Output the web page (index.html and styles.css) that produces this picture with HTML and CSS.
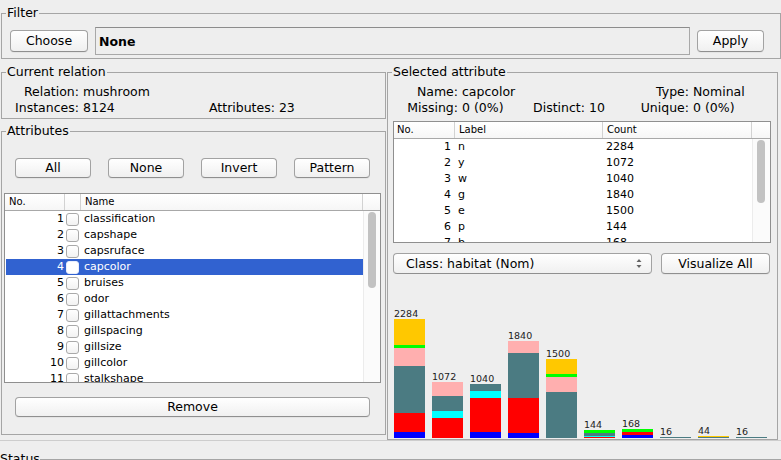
FILE: index.html
```html
<!DOCTYPE html>
<html>
<head>
<meta charset="utf-8">
<title>Weka Explorer - Preprocess</title>
<link rel="stylesheet" href="styles.css">
</head>
<body>
<div class="app">
  <section class="group filter">
    <div class="title">Filter</div>
    <div class="filter-row">
      <button class="btn choose">Choose</button>
      <div class="field">None</div>
      <button class="btn apply">Apply</button>
    </div>
  </section>

  <div class="columns">
    <div class="left">
      <section class="group relation">
        <div class="title">Current relation</div>
        <div class="info rel-info">
          <span class="lbl">Relation:</span><span class="val">mushroom</span><span></span><span></span>
          <span class="lbl">Instances:</span><span class="val">8124</span><span class="lbl2">Attributes:</span><span class="val">23</span>
        </div>
      </section>

      <section class="group attributes">
        <div class="title">Attributes</div>
        <div class="sel-buttons">
          <button class="btn small">All</button>
          <button class="btn small">None</button>
          <button class="btn small">Invert</button>
          <button class="btn small">Pattern</button>
        </div>
        <div class="table attr-table">
          <div class="thead">
            <span class="th">No.</span><span class="th"></span><span class="th">Name</span><span class="th filler"></span>
          </div>
          <div class="tbody">
            <div class="rows">
              <div class="tr"><span class="td num">1</span><span class="td chk"><i class="cb"></i></span><span class="td name">classification</span></div>
              <div class="tr"><span class="td num">2</span><span class="td chk"><i class="cb"></i></span><span class="td name">capshape</span></div>
              <div class="tr"><span class="td num">3</span><span class="td chk"><i class="cb"></i></span><span class="td name">capsruface</span></div>
              <div class="tr selected"><span class="td num">4</span><span class="td chk"><i class="cb"></i></span><span class="td name">capcolor</span></div>
              <div class="tr"><span class="td num">5</span><span class="td chk"><i class="cb"></i></span><span class="td name">bruises</span></div>
              <div class="tr"><span class="td num">6</span><span class="td chk"><i class="cb"></i></span><span class="td name">odor</span></div>
              <div class="tr"><span class="td num">7</span><span class="td chk"><i class="cb"></i></span><span class="td name">gillattachments</span></div>
              <div class="tr"><span class="td num">8</span><span class="td chk"><i class="cb"></i></span><span class="td name">gillspacing</span></div>
              <div class="tr"><span class="td num">9</span><span class="td chk"><i class="cb"></i></span><span class="td name">gillsize</span></div>
              <div class="tr"><span class="td num">10</span><span class="td chk"><i class="cb"></i></span><span class="td name">gillcolor</span></div>
              <div class="tr"><span class="td num">11</span><span class="td chk"><i class="cb"></i></span><span class="td name">stalkshape</span></div>
            </div>
            <div class="vscroll"><div class="thumb attr-thumb"></div></div>
          </div>
        </div>
        <button class="btn remove">Remove</button>
      </section>
    </div>

    <section class="group selected">
      <div class="title">Selected attribute</div>
      <div class="info sel-info">
        <span class="lbl">Name:</span><span class="val">capcolor</span><span></span><span></span><span class="lbl">Type:</span><span class="val">Nominal</span>
        <span class="lbl">Missing:</span><span class="val">0 (0%)</span><span class="lbl">Distinct:</span><span class="val">10</span><span class="lbl">Unique:</span><span class="val">0 (0%)</span>
      </div>
      <div class="table val-table">
        <div class="thead">
          <span class="th">No.</span><span class="th">Label</span><span class="th">Count</span><span class="th filler"></span>
        </div>
        <div class="tbody">
          <div class="rows">
            <div class="tr"><span class="td num">1</span><span class="td">n</span><span class="td">2284</span></div>
            <div class="tr"><span class="td num">2</span><span class="td">y</span><span class="td">1072</span></div>
            <div class="tr"><span class="td num">3</span><span class="td">w</span><span class="td">1040</span></div>
            <div class="tr"><span class="td num">4</span><span class="td">g</span><span class="td">1840</span></div>
            <div class="tr"><span class="td num">5</span><span class="td">e</span><span class="td">1500</span></div>
            <div class="tr"><span class="td num">6</span><span class="td">p</span><span class="td">144</span></div>
            <div class="tr"><span class="td num">7</span><span class="td">b</span><span class="td">168</span></div>
          </div>
          <div class="vscroll"><div class="thumb val-thumb"></div></div>
        </div>
      </div>
      <div class="controls">
        <div class="select">
          <span>Class: habitat (Nom)</span>
          <svg class="arrows" width="6" height="11" viewBox="0 0 6 11"><path d="M0.5 4 L3 1 L5.5 4 Z M0.5 7 L3 10 L5.5 7 Z" fill="#666"/></svg>
        </div>
        <button class="btn visualize">Visualize All</button>
      </div>
      <div class="histogram">
        <div class="bar"><span class="blabel">2284</span><div class="stack">
          <i class="or" style="height:26px"></i><i class="gr" style="height:3px"></i><i class="pk" style="height:18px"></i><i class="tl" style="height:47px"></i><i class="rd" style="height:19px"></i><i class="bl" style="height:6px"></i>
        </div></div>
        <div class="bar"><span class="blabel">1072</span><div class="stack">
          <i class="pk" style="height:14px"></i><i class="tl" style="height:15px"></i><i class="cy" style="height:7px"></i><i class="rd" style="height:20px"></i>
        </div></div>
        <div class="bar"><span class="blabel">1040</span><div class="stack">
          <i class="tl" style="height:7px"></i><i class="cy" style="height:7px"></i><i class="rd" style="height:34px"></i><i class="bl" style="height:6px"></i>
        </div></div>
        <div class="bar"><span class="blabel">1840</span><div class="stack">
          <i class="pk" style="height:12px"></i><i class="tl" style="height:45px"></i><i class="rd" style="height:35px"></i><i class="bl" style="height:5px"></i>
        </div></div>
        <div class="bar"><span class="blabel">1500</span><div class="stack">
          <i class="or" style="height:15px"></i><i class="gr" style="height:3px"></i><i class="pk" style="height:15px"></i><i class="tl" style="height:46px"></i>
        </div></div>
        <div class="bar"><span class="blabel">144</span><div class="stack">
          <i class="gr" style="height:3px"></i><i class="tl" style="height:3px"></i><i class="cy" style="height:1px"></i><i class="rd" style="height:1px"></i>
        </div></div>
        <div class="bar"><span class="blabel">168</span><div class="stack">
          <i class="gr" style="height:3px"></i><i class="rd" style="height:3px"></i><i class="bl" style="height:3px"></i>
        </div></div>
        <div class="bar"><span class="blabel">16</span><div class="stack">
          <i class="tl" style="height:1px"></i>
        </div></div>
        <div class="bar"><span class="blabel">44</span><div class="stack">
          <i class="or" style="height:1px"></i><i class="tl" style="height:1px"></i>
        </div></div>
        <div class="bar"><span class="blabel">16</span><div class="stack">
          <i class="tl" style="height:1px"></i>
        </div></div>
      </div>
    </section>
  </div>

  <div class="sep"></div>
  <section class="group status">
    <div class="title status-title">Status</div>
  </section>
</div>
</body>
</html>
```

FILE: styles.css
```css
* { box-sizing: border-box; }
html, body { margin: 0; padding: 0; }
body {
  width: 781px;
  height: 460px;
  overflow: hidden;
  background: #eeeeee;
  font-family: "DejaVu Sans", "Liberation Sans", sans-serif;
  font-size: 12.5px;
  color: #000;
}

.app {
  width: 781px;
  height: 460px;
  overflow: hidden;
  padding-top: 13px;
}

/* Titled group boxes */
.group {
  border: 1px solid #a5a5a5;
}
.title {
  display: table;
  margin: -8px 0 0 4px;
  padding: 0 1px;
  line-height: 14px;
  background: #eeeeee;
  white-space: nowrap;
}

/* Filter */
.filter {
  margin-left: 1px;
  width: 780px;
  height: 46px;
}
.filter-row {
  display: flex;
  align-items: center;
  gap: 7px;
  padding: 7px 0 0 8px;
}

.btn {
  display: block;
  font-family: inherit;
  font-size: 12.5px;
  color: #000;
  background: linear-gradient(#ffffff, #f0f0f0);
  border: 1px solid #a2a2a2;
  border-bottom-color: #8f8f8f;
  border-radius: 4px;
  padding: 0;
  margin: 0;
  line-height: 18px;
  box-shadow: 0 1px 0 rgba(0,0,0,0.04);
}
.choose { width: 78px; height: 22px; }
.apply { width: 67px; height: 22px; }
.field {
  width: 595px;
  height: 28px;
  border: 1px solid #a8a8a8;
  border-top-color: #8c8c8c;
  background: #eeeeee;
  font-weight: bold;
  line-height: 28px;
  padding-left: 3px;
}

/* Columns */
.columns {
  display: flex;
  margin-top: 13px;
  padding-left: 1px;
}
.left { width: 385px; }
.relation { height: 47px; }
.attributes { margin-top: 12px; height: 304px; }
.selected { width: 391px; height: 368px; margin-left: 1px; }

.info {
  display: grid;
  column-gap: 4px;
  line-height: 16px;
  margin-top: 5px;
  white-space: nowrap;
}
.info .lbl { text-align: right; }
.rel-info { grid-template-columns: 77px 122px auto 1fr; }
.sel-info { grid-template-columns: 70px 67px 52px 47px 49px 1fr; }

/* Attribute selection buttons */
.sel-buttons {
  display: grid;
  grid-template-columns: repeat(4, 76px);
  column-gap: 17px;
  margin: 20px 0 0 13px;
}
.btn.small { height: 20px; line-height: 18px; }
.remove {
  width: 355px;
  height: 20px;
  margin: 14px 0 0 13px;
}

/* Tables */
.table {
  border: 1px solid #8f8f8f;
  background: #fff;
  overflow: hidden;
}
.attr-table { width: 377px; height: 190px; margin: 15px 0 0 2px; }
.val-table { width: 378px; height: 122px; margin: 5px 0 0 5px; }

.thead {
  display: grid;
  height: 17px;
  border-bottom: 1px solid #a8a8a8;
  background: linear-gradient(#ffffff, #f6f6f6);
  font-size: 10px;
  line-height: 16px;
}
.attr-table .thead { grid-template-columns: 60px 16px 282px 17px; }
.val-table .thead { grid-template-columns: 61px 148px 149px 18px; }
.th {
  padding-left: 4px;
  border-right: 1px solid #d2d2d2;
  white-space: nowrap;
}
.th.filler { border-right: none; }
.val-table .th:first-child { padding-left: 3px; }

.tbody { display: flex; align-items: flex-start; }
.rows { flex: none; font-size: 11px; line-height: 16px; }
.attr-table .rows { width: 358px; }
.val-table .rows { width: 358px; }
.tr { display: grid; height: 16px; white-space: nowrap; }
.attr-table .tr { grid-template-columns: 60px 16px 281px; margin-left: 1px; }
.val-table .tr { grid-template-columns: 61px 148px 149px; }
.td.num { text-align: right; padding-right: 2px; }
.val-table .td { padding-left: 3px; }
.val-table .td.num { padding-left: 0; padding-right: 4px; }
.td.name { padding-left: 2px; }
.td.chk { display: flex; align-items: center; }
.cb {
  display: block;
  width: 13px;
  height: 13px;
  border: 1px solid #a9a9a9;
  border-radius: 3px;
  background: linear-gradient(#ffffff, #f2f2f2);
}
.tr.selected { background: #3162d0; color: #fff; }
.tr.selected .cb { border-color: #e8eefc; background: #fff; }

.vscroll {
  flex: none;
  width: 17px;
  height: 180px;
  background: #fbfbfb;
  border-left: 1px solid #ececec;
  padding-left: 4px;
}
.val-table .vscroll { width: 18px; }
.thumb {
  width: 8px;
  border-radius: 4px;
  background: #c2c2c2;
}
.attr-thumb { margin-top: 1px; height: 76px; }
.val-thumb { margin-top: 1px; height: 63px; }

/* Controls */
.controls {
  display: flex;
  gap: 9px;
  margin: 10px 0 0 5px;
  height: 21px;
}
.select {
  width: 259px;
  height: 21px;
  display: flex;
  align-items: center;
  justify-content: space-between;
  padding: 0 9px 0 12px;
  background: linear-gradient(#ffffff, #f0f0f0);
  border: 1px solid #a2a2a2;
  border-bottom-color: #8f8f8f;
  border-radius: 4px;
}
.arrows { display: block; }
.visualize { width: 109px; height: 21px; }

/* Histogram */
.histogram {
  display: flex;
  align-items: flex-end;
  gap: 7px;
  height: 164px;
  padding-left: 6px;
}
.bar { width: 31px; display: flex; flex-direction: column; }
.blabel {
  font-size: 9.5px;
  line-height: 9px;
  color: #222;
  white-space: nowrap;
}
.stack { display: flex; flex-direction: column; margin-top: 1px; }
.stack i { display: block; width: 31px; }
.or { background: #ffc800; }
.gr { background: #00ff00; }
.pk { background: #ffafaf; }
.tl { background: #4b7b82; }
.cy { background: #00ffff; }
.rd { background: #ff0000; }
.bl { background: #0000ff; }

/* Status */
.sep { border-top: 1px solid #cdcdcd; width: 781px; }
.status { margin-top: 18px; width: 781px; height: 1px; border-bottom: none; }
.status-title { margin-left: -1px; padding: 0; }
```
